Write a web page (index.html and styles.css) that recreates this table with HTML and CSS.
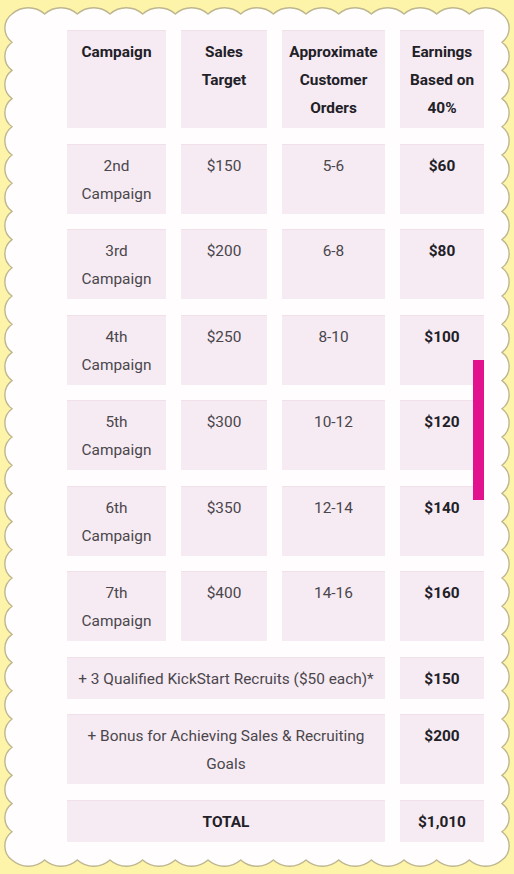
FILE: index.html
```html
<!DOCTYPE html>
<html>
<head>
<meta charset="utf-8">
<link rel="stylesheet" href="styles.css">
</head>
<body>
<div class="page">
  <svg class="frame" width="514" height="874" viewBox="0 0 514 874"><path id="scallop" d="" fill="#fffdfd" stroke="#bdb68f" stroke-width="1.4"/></svg>
  <div class="table">
    <div class="cell head">Campaign</div>
    <div class="cell head">Sales Target</div>
    <div class="cell head">Approximate Customer Orders</div>
    <div class="cell head">Earnings Based on 40%</div>

    <div class="cell">2nd Campaign</div><div class="cell">$150</div><div class="cell">5-6</div><div class="cell b">$60</div>
    <div class="cell">3rd Campaign</div><div class="cell">$200</div><div class="cell">6-8</div><div class="cell b">$80</div>
    <div class="cell">4th Campaign</div><div class="cell">$250</div><div class="cell">8-10</div><div class="cell b">$100</div>
    <div class="cell">5th Campaign</div><div class="cell">$300</div><div class="cell">10-12</div><div class="cell b">$120</div>
    <div class="cell">6th Campaign</div><div class="cell">$350</div><div class="cell">12-14</div><div class="cell b">$140</div>
    <div class="cell">7th Campaign</div><div class="cell">$400</div><div class="cell">14-16</div><div class="cell b">$160</div>

    <div class="cell span3">+ 3 Qualified KickStart Recruits ($50 each)*</div><div class="cell b">$150</div>
    <div class="cell span3">+ Bonus for Achieving Sales &amp; Recruiting Goals</div><div class="cell b">$200</div>
    <div class="cell span3 b">TOTAL</div><div class="cell b">$1,010</div>
  </div>
  <div class="scrollbar"></div>
</div>
<script src="script.js"></script>
</body>
</html>
```
FILE: styles.css
```css
html, body {
  margin: 0;
  padding: 0;
  background: #fdf4a9;
}
.page {
  position: relative;
  width: 514px;
  height: 874px;
  overflow: hidden;
  font-family: Roboto, "Liberation Sans", sans-serif;
  font-size: 15.4px;
  line-height: 28px;
  color: #4a464c;
}
.frame {
  position: absolute;
  left: 0;
  top: 0;
}
.table {
  position: relative;
  display: grid;
  grid-template-columns: 99px 86px 103px 84px;
  column-gap: 15px;
  row-gap: 15.5px;
  padding: 30px 0 0 67px;
}
.cell {
  background: #f6ebf3;
  border-top: 1px solid #f1e0e8;
  padding: 7px 10px 6px;
  text-align: center;
}
.head {
  font-weight: 700;
  color: #222027;
  padding-left: 4px;
  padding-right: 4px;
}
.b {
  font-weight: 700;
  color: #222027;
}
.span3 {
  grid-column: span 3;
}
.scrollbar {
  position: absolute;
  left: 473px;
  top: 360px;
  width: 11px;
  height: 140px;
  background: #e2118d;
}
```
FILE: script.js
```js
(function () {
  var x0 = 12, y0 = 14, x1 = 502, y1 = 860;
  var d = "M" + x0 + " " + y0;
  var nh = 15, nv = 30;
  var wh = (x1 - x0) / nh, wv = (y1 - y0) / nv;
  var rh = wh * 0.75, rv = wv * 0.62;
  var i;
  for (i = 0; i < nh; i++) d += " a" + rh + " " + rh + " 0 0 1 " + wh + " 0";
  for (i = 0; i < nv; i++) d += " a" + rv + " " + rv + " 0 0 1 0 " + wv;
  for (i = 0; i < nh; i++) d += " a" + rh + " " + rh + " 0 0 1 " + (-wh) + " 0";
  for (i = 0; i < nv; i++) d += " a" + rv + " " + rv + " 0 0 1 0 " + (-wv);
  d += " Z";
  document.getElementById("scallop").setAttribute("d", d);
})();
```
